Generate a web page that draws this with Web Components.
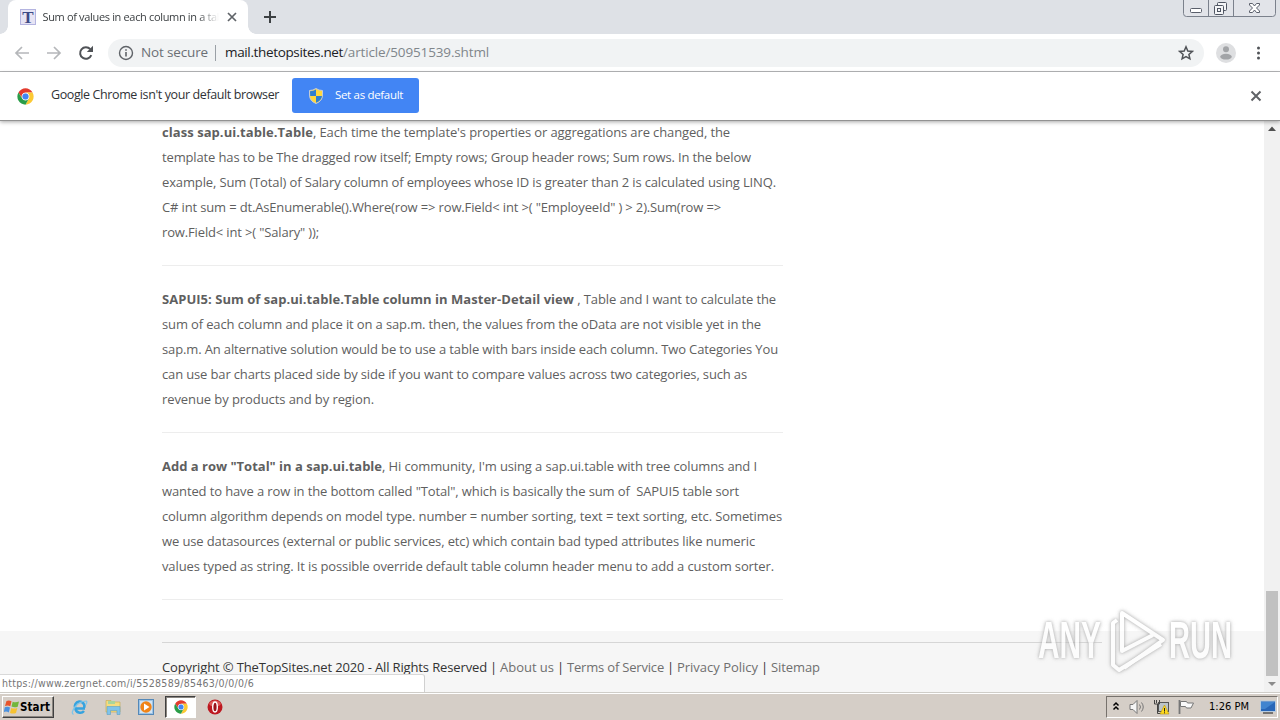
<!DOCTYPE html>
<html lang="en">
<head>
<meta charset="utf-8">
<title>Sum of values in each column in a table</title>
<style>
html,body{margin:0;height:720px;overflow:hidden;background:#fff}
body{font-family:"Open Sans",sans-serif}
</style>
</head>
<body>
<desktop-screen></desktop-screen>
<script>
function define(name, html, after) {
  const template = document.createElement('template');
  template.innerHTML = html;
  customElements.define(name, class extends HTMLElement {
    connectedCallback() {
      if (this.shadowRoot) return;
      this.attachShadow({mode: 'open'}).append(template.content.cloneNode(true));
      if (after) after(this, this.shadowRoot);
    }
  });
}

/* A single line of text tracked so that it fills the width given in pixels. */
define('fit-text', `<style>:host{display:inline-block;white-space:pre;flex:none;vertical-align:top}span{display:inline-block}</style><span><slot></slot></span>`, (el, root) => {
  const w = parseFloat(el.getAttribute('w'));
  const n = el.textContent.length;
  const natural = root.querySelector('span').getBoundingClientRect().width;
  el.style.width = w + 'px';
  el.style.letterSpacing = ((w - natural) / n) + 'px';
});

define('chrome-logo', `<style>:host{display:block;width:16px;height:16px}svg{display:block;width:100%;height:100%}</style>
<svg viewBox="0 0 48 48"><circle cx="24" cy="24" r="23" fill="#fff"/>
<path d="M4.1 12.5A23 23 0 0 1 43.9 12.5L24 13A11 11 0 0 0 14.5 29.5Z" fill="#e33b2e"/>
<path d="M43.9 12.5A23 23 0 0 1 24 47L33.5 29.5A11 11 0 0 0 24 12.9Z" fill="#fcc934"/>
<path d="M24 47A23 23 0 0 1 4.1 12.5L14.5 29.5A11 11 0 0 0 33.5 29.5Z" fill="#2a9d48"/>
<circle cx="24" cy="24" r="10" fill="#e4ecf8"/><circle cx="24" cy="24" r="8.6" fill="#4285f4"/></svg>`);

define('window-buttons', `<style>:host{display:block;width:94px;height:17px}svg{display:block}</style>
<svg width="94" height="17" fill="none" stroke="#7b818c"><path d="M.5-1V13.500Q.5 16.500 3.500 16.500H89.500Q92.500 16.500 92.500 13.500V-1" fill="#e2e4e9"/><path d="M25.500 0V16M50.500 0V16"/>
<rect x="7.500" y="8.500" width="11" height="4" rx="1" stroke="#5a5f6b" fill="#fff"/>
<g stroke="#4f5562" fill="#f4f5f7"><rect x="34.500" y="2.500" width="9" height="8" rx="1"/><rect x="31.500" y="5.500" width="9" height="9" rx="1"/><rect x="34.500" y="8.500" width="3" height="3"/></g>
<path d="M66.500 3.500h3l2 2.500 2-2.500h3v1.500l-3 3 3 3v1.500h-3l-2-2.500-2 2.500h-3v-1.500l3-3-3-3z" stroke="#5a5f6b" fill="#fff"/></svg>`);

define('tab-strip', `<style>
:host{display:flex;position:relative;height:34px;background:#dee1e6;padding-left:8px;box-sizing:border-box;justify-content:space-between}
.left{display:flex;align-items:center}
.tab{position:relative;width:240px;height:34px;box-sizing:border-box;background:#fff;border-radius:8px 8px 0 0;display:flex;align-items:center;padding:0 9px 0 12px;justify-content:space-between}
.tab::before,.tab::after{content:"";position:absolute;bottom:0;width:8px;height:8px}
.tab::before{left:-8px;background:radial-gradient(circle at 0 0,transparent 7.5px,#fff 8px)}
.tab::after{right:-8px;background:radial-gradient(circle at 100% 0,transparent 7.500px,#fff 8px)}
.fav{width:14px;height:14px;border:1px solid #b4b4e0;background:#e6e4f4;color:#3d4a86;font:bold 17px/15px "Liberation Serif",serif;text-align:center}
.title{width:176px;overflow:hidden;font:11px/18px "Open Sans",sans-serif;color:#3c4043;-webkit-mask-image:linear-gradient(90deg,#000 155px,transparent 176px)}
.plus{margin-left:15px}
window-buttons{margin-right:3px}
svg{display:block}
</style>
<div class="left"><div class="tab"><div class="fav">T</div><div class="title"><fit-text w="189">Sum of values in each column in a table</fit-text></div>
<svg width="14" height="14" stroke="#5f6368" stroke-width="1.700"><path d="M3 3l8 8M11 3l-8 8"/></svg></div>
<svg class="plus" width="14" height="14" stroke="#3c4043" stroke-width="2"><path d="M7 1v12M1 7h12"/></svg></div>
<window-buttons></window-buttons>`);

define('tool-bar', `<style>
:host{display:flex;height:37px;align-items:center;background:#fff;border-bottom:1px solid #b4b5b7;padding:0 14px 0 14px;box-sizing:content-box;width:1252px;font:13.5px/20px "Open Sans",sans-serif}
svg{display:block;flex:none}.nav{display:flex;gap:16px}
.omni{margin-left:14px;width:1096px;height:28px;border-radius:14px;background:#f1f3f4;display:flex;align-items:center;box-sizing:border-box;padding:0 10px}
fit-text{margin-top:-2px}
.sec{margin-left:7px;color:#6b6f74}.sep{width:1px;height:16px;background:#9aa0a6;margin:0 9px 0 7px}
.host{color:#202124}.path{color:#80868b}.star{margin-left:auto}
.avatar{margin-left:12px}.menu{margin-left:14px}
</style>
<div class="nav">
<svg width="16" height="16" fill="none" stroke="#b5b7ba" stroke-width="1.700"><path d="M15 8H2M8 2L2 8l6 6"/></svg>
<svg width="16" height="16" fill="none" stroke="#b5b7ba" stroke-width="1.700"><path d="M1 8h13M8 2l6 6-6 6"/></svg>
<svg width="16" height="16" fill="none" stroke="#505357" stroke-width="2"><path d="M13.300 10.200A5.800 5.800 0 1 1 12.300 4.200"/><path d="M15 .8V7H8.800z" fill="#505357" stroke="none"/></svg></div>
<div class="omni"><svg width="16" height="16"><circle cx="8" cy="8" r="6.500" fill="none" stroke="#5f6368" stroke-width="1.400"/><path d="M8 7v4.500M8 4.200v1.600" stroke="#5f6368" stroke-width="1.600"/></svg>
<fit-text class="sec" w="67">Not secure</fit-text><i class="sep"></i><fit-text class="host" w="118">mail.thetopsites.net</fit-text><fit-text class="path" w="146">/article/50951539.shtml</fit-text>
<svg class="star" width="16" height="16" fill="none" stroke="#505357" stroke-width="1.500"><path d="M8 1.800l1.800 4.200 4.500.4-3.400 3 1 4.400L8 11.500l-3.900 2.300 1-4.400-3.400-3 4.500-.4z"/></svg></div>
<svg class="avatar" width="20" height="20"><circle cx="10" cy="10" r="10" fill="#dedfe1"/><circle cx="10" cy="6.200" r="3" fill="#a2a4a7"/><ellipse cx="10" cy="13.700" rx="5.800" ry="2.900" fill="#a2a4a7"/></svg>
<svg class="menu" width="16" height="16" fill="#505357"><circle cx="8.500" cy="3" r="1.500"/><circle cx="8.500" cy="8" r="1.500"/><circle cx="8.500" cy="13" r="1.500"/></svg>`);

define('info-bar', `<style>
:host{display:flex;height:48px;margin-bottom:1px;align-items:center;background:#fff;padding:0 17px;position:relative;z-index:2;box-shadow:0 1px 0 #929292,0 2px 4px rgba(0,0,0,.35);font:12.5px/18px "Open Sans",sans-serif;color:#303236}
chrome-logo{width:17px;height:17px}.msg{margin:-3px 0 0 17px}
.btn{margin-left:13px;width:127px;height:35px;margin-top:-1px;box-sizing:border-box;background:#4285f4;color:#fff;border-radius:3px;display:flex;align-items:center;padding-left:17px;gap:12px;font-size:11.5px}
.btn fit-text{margin-top:-2px}
.x{margin-left:auto}svg{display:block}
</style><chrome-logo></chrome-logo><fit-text class="msg" w="228">Google Chrome isn't your default browser</fit-text>
<div class="btn"><svg width="14" height="16" viewBox="0 0 14 16"><path d="M7 .5Q10 2.500 13.500 2.500V7Q13.500 13 7 15.500Q.5 13 .5 7V2.500Q4 2.500 7 .5Z" fill="#ffd83d" stroke="#c3cbd8"/><path d="M7 1.500V8H1.200L1 3.300Q4.500 3.300 7 1.500ZM7 8H13Q12.500 12.500 7 14.700Z" fill="#2f7fd0"/></svg><fit-text w="68">Set as default</fit-text></div>
<svg class="x" width="14" height="14" stroke="#606367" stroke-width="2"><path d="M2.500 2.500l9 9M11.500 2.500l-9 9"/></svg>`);

define('article-block', `<style>:host{display:flex;flex-direction:column;align-items:flex-start;width:621px;padding-bottom:20px;margin-bottom:21px;border-bottom:1px solid #ededed;font:13px/25px "Open Sans",sans-serif;color:#5f5f5f}
::slotted(div){display:flex;height:25px}</style><slot></slot>`);

define('page-footer', `<style>:host{display:block;background:#f6f6f6;height:61px;padding:11px 162px 0;box-sizing:border-box}
.in{border-top:1px solid #d6d6d6;padding-top:12px;display:flex;font:13px/25px "Open Sans",sans-serif;color:#333}a{color:#6f6f6f}</style>
<div class="in"><fit-text w="325">Copyright © TheTopSites.net 2020 - All Rights Reserved</fit-text><fit-text w="13"> | </fit-text><a><fit-text w="54">About us</fit-text></a><fit-text w="13"> | </fit-text><a><fit-text w="97">Terms of Service</fit-text></a><fit-text w="13"> | </fit-text><a><fit-text w="81">Privacy Policy</fit-text></a><fit-text w="13"> | </fit-text><a><fit-text w="49">Sitemap</fit-text></a></div>`);

define('scroll-bar', `<style>:host{display:flex;flex-direction:column;align-items:center;width:16px;background:#f1f1f1}
.thumb{width:12px;height:85px;margin-top:auto;background:#c1c1c1}svg{display:block}</style>
<svg width="16" height="16"><path d="M4 10l4-4.500 4 4.500z" fill="#505050"/></svg><div class="thumb"></div><svg width="16" height="16"><path d="M4 6h8l-4 4z" fill="#8b8b8b"/></svg>`);

define('status-bubble', `<style>:host{display:block;position:absolute;left:0;bottom:0;width:425px;height:18px;box-sizing:border-box;background:#fff;border-top:1px solid #d9d9d9;border-right:1px solid #d0d0d0;border-top-right-radius:3px;padding-left:2px;font:10.5px/17px "DejaVu Sans Condensed","DejaVu Sans",sans-serif;color:#757575}</style><fit-text w="252">https://www.zergnet.com/i/5528589/85463/0/0/0/6</fit-text>`);

/* The outlined mark that floats over the lower right of the page. */
define('run-watermark', `<style>:host{display:flex;align-items:center;position:absolute;left:1038px;top:483px;width:196px;height:74px;color:#fff;filter:drop-shadow(0 0 1.5px #999) drop-shadow(0 0 2px #ccc);opacity:.72}
.w{height:38px;width:65px}.w span{display:block;width:max-content;font:bold 51px/38px "Liberation Sans",sans-serif;transform-origin:0 50%}
svg{display:block;flex:none}</style>
<div class="w"><span>ANY</span></div><svg width="66" height="74" fill="none" stroke="#fff" stroke-width="4" stroke-linejoin="round"><path d="M19 36V9L60 36L21 64"/><path d="M19 35V47L50 31"/><path d="M14 16L10 19V61L16 66L58 40"/></svg><div class="w"><span>RUN</span></div>`, (el, root) => {
  root.querySelectorAll('.w span').forEach(s => { s.style.transform = 'scaleX(' + 63 / s.getBoundingClientRect().width + ')'; });
});

define('page-view', `<style>:host{display:flex;position:relative;height:571px;overflow:hidden;background:#fff}
.page{width:1264px;display:flex;flex-direction:column}.body{box-sizing:border-box;height:510px;padding-left:162px;overflow:hidden}.body article-block:first-child{margin-top:-1px}</style>
<div class="page"><div class="body">
<article-block><div><b><fit-text w="151">class sap.ui.table.Table</fit-text></b><fit-text w="417">, Each time the template's properties or aggregations are changed, the</fit-text></div>
<div><fit-text w="589">template has to be The dragged row itself; Empty rows; Group header rows; Sum rows. In the below</fit-text></div>
<div><fit-text w="614">example, Sum (Total) of Salary column of employees whose ID is greater than 2 is calculated using LINQ.</fit-text></div>
<div><fit-text w="559">C# int sum = dt.AsEnumerable().Where(row =&gt; row.Field&lt; int &gt;( "EmployeeId" ) &gt; 2).Sum(row =&gt;</fit-text></div>
<div><fit-text w="157">row.Field&lt; int &gt;( "Salary" ));</fit-text></div></article-block>
<article-block><div><b><fit-text w="412">SAPUI5: Sum of sap.ui.table.Table column in Master-Detail view</fit-text></b><fit-text w="202"> , Table and I want to calculate the</fit-text></div>
<div><fit-text w="599">sum of each column and place it on a sap.m. then, the values from the oData are not visible yet in the</fit-text></div>
<div><fit-text w="616">sap.m. An alternative solution would be to use a table with bars inside each column. Two Categories You</fit-text></div>
<div><fit-text w="585">can use bar charts placed side by side if you want to compare values across two categories, such as</fit-text></div>
<div><fit-text w="212">revenue by products and by region.</fit-text></div></article-block>
<article-block><div><b><fit-text w="220">Add a row "Total" in a sap.ui.table</fit-text></b><fit-text w="375">, Hi community, I'm using a sap.ui.table with tree columns and I</fit-text></div>
<div><fit-text w="577">wanted to have a row in the bottom called "Total", which is basically the sum of  SAPUI5 table sort</fit-text></div>
<div><fit-text w="620">column algorithm depends on model type. number = number sorting, text = text sorting, etc. Sometimes</fit-text></div>
<div><fit-text w="593">we use datasources (external or public services, etc) which contain bad typed attributes like numeric</fit-text></div>
<div><fit-text w="612">values typed as string. It is possible override default table column header menu to add a custom sorter.</fit-text></div></article-block>
</div><page-footer></page-footer></div><scroll-bar></scroll-bar><status-bubble></status-bubble><run-watermark></run-watermark>`);

define('task-bar', `<style>:host{display:flex;height:28px;box-sizing:border-box;background:#d5cec7;border-top:1px solid #cfcdc8;box-shadow:inset 0 1px 0 #fff;padding:3px 2px 2px;align-items:flex-start}
svg{display:block;flex:none}
.start{display:flex;align-items:center;width:52px;height:22px;box-sizing:border-box;border:1px solid;border-color:#fff #404040 #404040 #fff;box-shadow:inset -1px -1px 0 #8b8680;font:bold 11.5px/18px "DejaVu Sans Condensed","DejaVu Sans",sans-serif;color:#000;padding-left:1px}
.quick{display:flex;align-items:center;height:22px;margin-left:17px}
.quick svg{margin-right:17px}
.active{width:31px;height:22px;box-sizing:border-box;background:#fff;border:1px solid;border-color:#404040 #fff #fff #404040;box-shadow:inset 1px 1px 0 #8b8680;display:flex;align-items:center;justify-content:center;margin:0 11px 0 -6px;padding-left:1px}
chrome-logo{width:14px;height:14px}
.tray{margin-left:auto;width:172px;height:22px;box-sizing:border-box;border:1px solid;border-color:#77726d #fff #fff #77726d;display:flex;align-items:center;font:11px/18px "DejaVu Sans Condensed","DejaVu Sans",sans-serif;color:#000}
</style>
<div class="start"><svg width="16" height="16"><path d="M2.500 2Q5 .8 7.500 2.300L6.300 7.200Q4 6 1 7z" fill="#e8542b"/><path d="M8.700 2.800Q11.500 4 15 2.600L13.700 7.700Q10.500 9 7.500 7.500z" fill="#72b63c"/><path d="M.8 8.200Q3.500 7 6 8.500L4.800 13.500Q2.500 12-.2 13z" fill="#4b91df"/><path d="M7.300 8.900Q10 10 13.300 8.900L12 14Q9 15.200 6 13.900z" fill="#f6c231"/></svg><fit-text w="30">Start</fit-text></div>
<div class="quick">
<svg width="17" height="17" fill="none"><path d="M14 9.500H4.500M4.300 9.500A4.800 4.800 0 1 1 13.300 8.500M13 12A4.900 4.900 0 0 1 4.400 9.500" stroke="#36a3df" stroke-width="2.600"/><path d="M2.500 15.500Q-.5 14 4 8T15.500 2.200Q16.500 3 14.500 6" stroke="#7fc4e8" stroke-width="1.300"/></svg>
<svg width="16" height="16"><path d="M1 1.500h5l1 1.500h8V13H1z" fill="#f5dc80" stroke="#c5a84c" stroke-width=".6"/><path d="M3 2h7v3H3z" fill="#a9d59c"/><path d="M2 7.500h13v8h-3V11.500H5.500v4H2z" fill="#7fc3ea" stroke="#5e9fc4" stroke-width=".6"/></svg>
<svg width="16" height="16"><rect x=".5" y=".5" width="15" height="15" fill="#9dc4e6" stroke="#5488b8"/><rect x="2" y="2" width="12" height="12" fill="#d2e4f3"/><circle cx="8" cy="8" r="5.700" fill="#f08418"/><path d="M6 4.500v7l5.500-3.500z" fill="#fff"/></svg>
<div class="active"><chrome-logo></chrome-logo></div>
<svg width="16" height="16"><circle cx="8" cy="8" r="7.500" fill="#bd1820"/><path d="M2 5A6.800 6.800 0 0 1 14 5L12 7H4z" fill="#df5a58"/><ellipse cx="8" cy="8" rx="2.300" ry="5" fill="#9b1219" stroke="#fff" stroke-width="1.400"/></svg>
</div>
<div class="tray">
<svg style="width:101px;height:20px" viewBox="0 0 101 20">
<path d="M6.500 8.500L9 6l2.500 2.500M6.500 12.500L9 10l2.500 2.500" fill="none" stroke="#000" stroke-width="1.500"/>
<path d="M23 7.500h3l4-4v13l-4-4h-3z" fill="#f5f5f5" stroke="#777"/><path d="M32.500 7.500q2 2.500 0 5M34.500 5.500q3.500 4.500 0 9" fill="none" stroke="#777"/>
<rect x="51.500" y="5.500" width="10" height="9" fill="#bcc4c9" stroke="#555"/><path d="M47.500 3v4h5V3M49.500 3v3M50.500 7v9.500H57" fill="none" stroke="#444"/><path d="M57.500 8l4.500 9H53z" fill="#ffda1e" stroke="#b99513" stroke-width=".6"/><path d="M57.500 11v3.500M57.500 15.300v1" stroke="#222"/>
<path d="M72.500 3v14" stroke="#777" stroke-width="1.800"/><path d="M73.500 4.500h6l1 1.500h6l-2.500 5h-4.500l-1-1.500h-5z" fill="#fafafa" stroke="#777"/></svg>
<fit-text w="40" style="margin-left:1px">1:26 PM</fit-text>
<svg width="16" height="16" style="margin-left:11px"><rect x=".5" y="2" width="15" height="10.500" fill="#2766b8" stroke="#b6cbe0"/><path d="M1 3h14L5 10H1z" fill="#4084cf"/><path d="M3 14h10" stroke="#555" stroke-width="1.500"/></svg></div>`);

define('desktop-screen', `<style>:host{display:flex;flex-direction:column;width:1280px;height:720px;overflow:hidden}</style>
<tab-strip></tab-strip><tool-bar></tool-bar><info-bar></info-bar><page-view></page-view><task-bar></task-bar>`);
</script>
</body>
</html>
